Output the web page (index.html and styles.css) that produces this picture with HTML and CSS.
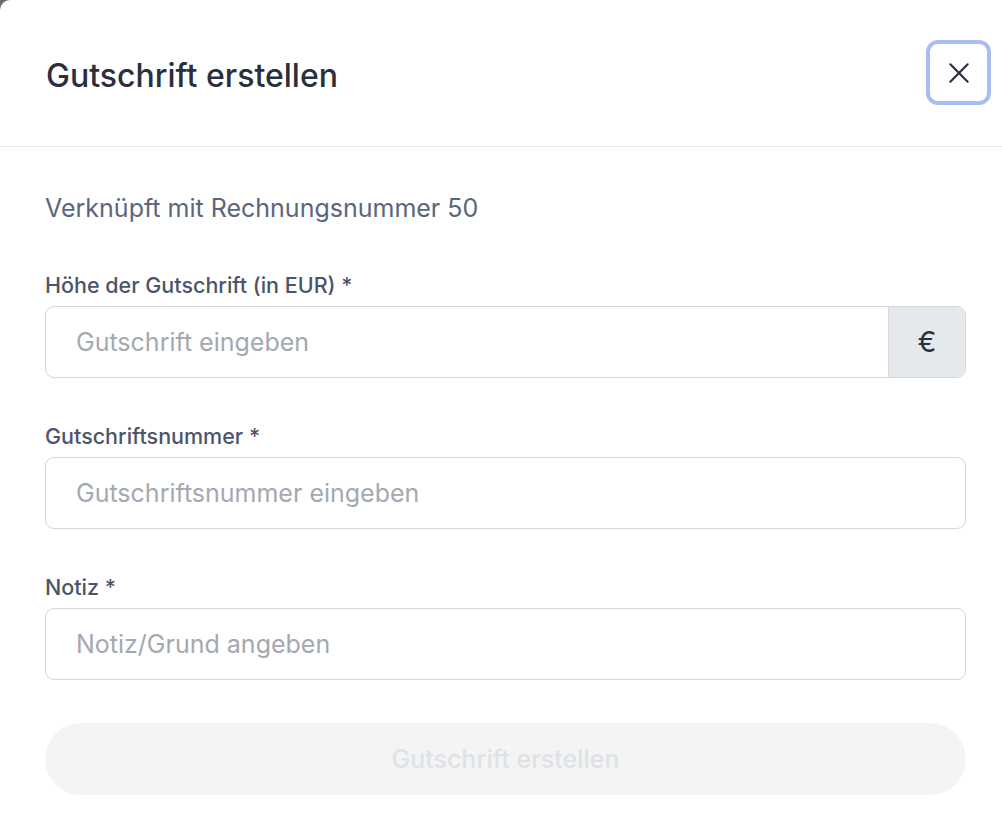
FILE: index.html
```html
<!DOCTYPE html>
<html lang="de">
<head>
    <meta charset="UTF-8">
    <meta name="viewport" content="width=device-width, initial-scale=1.0">
    <title>Gutschrift erstellen</title>
    <link rel="stylesheet" href="styles.css">
</head>
<body>
    <div class="modal">
        <header class="modal-header">
            <h1 class="modal-title">Gutschrift erstellen</h1>
            <button class="close-btn" type="button" aria-label="Schließen">
                <svg width="26" height="26" viewBox="0 0 24 24" fill="none" stroke="#2a2f3d" stroke-width="2" stroke-linecap="round">
                    <path d="M4 4 L20 20 M20 4 L4 20"/>
                </svg>
            </button>
        </header>

        <form class="modal-body">
            <p class="hint">Verknüpft mit Rechnungsnummer 50</p>

            <div class="field">
                <label class="field-label">Höhe der Gutschrift (in EUR) *</label>
                <div class="input-wrap">
                    <input class="input" type="text" placeholder="Gutschrift eingeben">
                    <span class="addon">€</span>
                </div>
            </div>

            <div class="field">
                <label class="field-label">Gutschriftsnummer *</label>
                <div class="input-wrap">
                    <input class="input" type="text" placeholder="Gutschriftsnummer eingeben">
                </div>
            </div>

            <div class="field">
                <label class="field-label">Notiz *</label>
                <div class="input-wrap">
                    <input class="input" type="text" placeholder="Notiz/Grund angeben">
                </div>
            </div>

            <button class="submit-btn" type="button" disabled>Gutschrift erstellen</button>
        </form>
    </div>
</body>
</html>
```

FILE: styles.css
```css
/* Grundlegende Stile */
*, *:before, *:after {
    box-sizing: border-box;
}
html, body {
    margin: 0;
    padding: 0;
    height: 100%;
    overflow: hidden;
    font-family: Inter, "Noto Sans", sans-serif;
    background-color: #6b6b6b; /* Hintergrund hinter dem Dialog */
}

.modal {
    background-color: #fff;
    min-height: 100%;
    border-top-left-radius: 10px;
}

/* Kopfbereich */
.modal-header {
    display: flex;
    align-items: center;
    justify-content: space-between;
    height: 147px;
    padding: 0 11px 0 46px;
    border-bottom: 1px solid #e6e9ec;
}
.modal-title {
    margin: 5px 0 0;
    font-size: 32px;
    font-weight: 500;
    color: #2a2f3d;
}
.close-btn {
    width: 65px;
    height: 65px;
    display: flex;
    align-items: center;
    justify-content: center;
    background: #fff;
    border: 4px solid #a9bdf3;
    border-radius: 12px;
    padding: 0;
    margin-top: -1px;
    cursor: pointer;
}

/* Formular */
.modal-body {
    padding: 45px 36px 0 45px;
}
.hint {
    margin: 0;
    font-size: 25px;
    line-height: 32px;
    color: #5b667a;
}
.field {
    margin-top: 44px;
}
.hint + .field {
    margin-top: 47px;
}
.field-label {
    display: block;
    font-size: 21.5px;
    line-height: 28px;
    font-weight: 500;
    color: #4b556a;
    margin-bottom: 7px;
}
.input-wrap {
    display: flex;
    height: 72px;
    border: 1px solid #d3d6dc;
    border-radius: 9px;
    overflow: hidden;
}
.input {
    flex: 1;
    border: none;
    outline: none;
    padding: 0 30px;
    font-family: inherit;
    font-size: 25px;
    color: #2a2f3d;
    background: transparent;
}
.input::placeholder {
    color: #a4a8b0;
}
.addon {
    width: 77px;
    display: flex;
    align-items: center;
    justify-content: center;
    background-color: #e5e9ec;
    border-left: 1px solid #d3d6dc;
    font-size: 28px;
    color: #2a2f3d;
}

.submit-btn {
    display: block;
    width: 100%;
    height: 72px;
    margin-top: 43px;
    border: none;
    border-radius: 36px;
    background-color: #f3f5f5;
    color: #dfe1e6;
    font-family: inherit;
    font-size: 25px;
    font-weight: 500;
}
```
